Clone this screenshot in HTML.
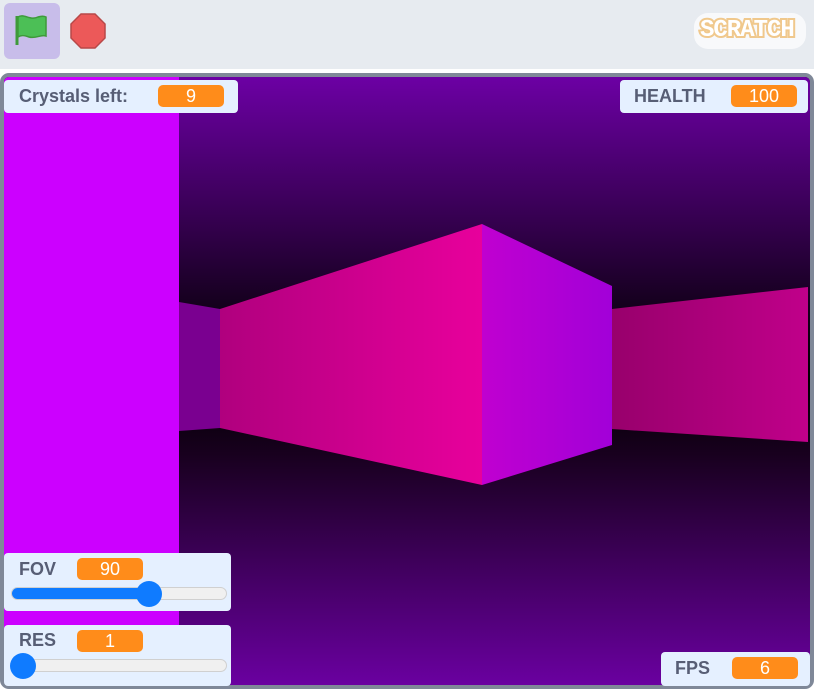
<!DOCTYPE html>
<html><head><style>
body{margin:0;width:814px;height:689px;background:#fff;position:relative;overflow:hidden;font-family:"Liberation Sans",sans-serif}
.top{position:absolute;left:0;top:0;width:814px;height:69px;background:#e7ebf0}
.stage{position:absolute;left:0;top:73px;width:806px;height:608px;border:4px solid #7f8898;border-radius:9px;overflow:hidden;background:#000}
.p{position:absolute;background:#e5f0ff;border-radius:4px;color:#575e75;font-weight:bold;font-size:18px}
.v{position:absolute;background:#ff8c1a;color:#fff;border-radius:5px;text-align:center;font-weight:normal;font-size:18px;height:22px;line-height:22px}
.track{position:absolute;left:7px;height:11px;width:214px;background:#f0f0f0;border:1px solid #d0d0d0;border-radius:7px}
.fill{position:absolute;left:0;top:0;height:11px;background:#0f7bff;border-radius:7px}
.knob{position:absolute;width:26px;height:26px;border-radius:50%;background:#0f7bff}
</style></head><body>
<div class="top"></div>
<div style="position:absolute;left:4px;top:3px;width:56px;height:56px;background:#c8bdea;border-radius:6px"></div>
<svg style="position:absolute;left:14px;top:12px" width="36" height="36" viewBox="0 0 36 36"><path d="M3 4 L3 33" stroke="#3e9a3a" stroke-width="3"/><path d="M4 5 C10 1,16 9,24 5 C27 4,30 4,32 5 L32 24 C27 22,22 27,15 25 C10 23,7 23,4 25 Z" fill="#4cbf56" stroke="#3e9a3a" stroke-width="1.5"/></svg>
<svg style="position:absolute;left:70px;top:13px" width="36" height="36" viewBox="0 0 36 36"><polygon points="11,1 25,1 35,11 35,25 25,35 11,35 1,25 1,11" fill="#ec5959" stroke="#b84848" stroke-width="1.5"/></svg>
<div style="position:absolute;left:694px;top:13px;width:112px;height:36px;background:#f8f9fb;border-radius:14px"></div>
<div style="position:absolute;left:700px;top:17px;font-family:'Liberation Mono',monospace;font-weight:bold;font-size:24px;color:#f2d2a0;-webkit-text-stroke:4px #f0c88c;letter-spacing:-1px">SCRATCH</div>
<div style="position:absolute;left:700px;top:17px;font-family:'Liberation Mono',monospace;font-weight:bold;font-size:24px;color:#fff;letter-spacing:-1px">SCRATCH</div>
<div class="stage">
<svg width="806" height="608" viewBox="4 78 806 608" style="display:block">
<defs>
<linearGradient id="sky" x1="0" y1="0" x2="0" y2="1"><stop offset="0" stop-color="#6c00a4"/><stop offset="0.38" stop-color="#14001c"/><stop offset="0.5" stop-color="#000"/><stop offset="0.62" stop-color="#18001e"/><stop offset="1" stop-color="#6a00a0"/></linearGradient>
<linearGradient id="front" x1="0" y1="0" x2="1" y2="0"><stop offset="0" stop-color="#b0007e"/><stop offset="1" stop-color="#e8009c"/></linearGradient>
<linearGradient id="side" x1="0" y1="0" x2="1" y2="0"><stop offset="0" stop-color="#c000d0"/><stop offset="1" stop-color="#a200d8"/></linearGradient>
<linearGradient id="far" x1="0" y1="0" x2="1" y2="0"><stop offset="0" stop-color="#98006c"/><stop offset="1" stop-color="#c0008a"/></linearGradient>
</defs>
<rect x="4" y="78" width="806" height="608" fill="url(#sky)"/>
<polygon points="179,303 220,310 220,429 179,432" fill="#7a0090"/>
<polygon points="220,310 482,225 482,486 220,429" fill="url(#front)"/>
<polygon points="482,225 612,287 612,446 482,486" fill="url(#side)"/>
<polygon points="612,310 808,288 808,443 612,430" fill="url(#far)"/>
<rect x="4" y="78" width="175" height="608" fill="#cc00ff"/>
</svg>
</div>
<div class="p" style="left:4px;top:80px;width:234px;height:33px"><span style="position:absolute;left:15px;top:6px">Crystals left:</span><div class="v" style="left:154px;top:5px;width:66px">9</div></div>
<div class="p" style="left:620px;top:80px;width:188px;height:33px"><span style="position:absolute;left:14px;top:6px">HEALTH</span><div class="v" style="left:111px;top:5px;width:66px">100</div></div>
<div class="p" style="left:4px;top:553px;width:227px;height:58px"><span style="position:absolute;left:15px;top:6px">FOV</span><div class="v" style="left:73px;top:5px;width:66px">90</div><div class="track" style="top:34px"><div class="fill" style="width:140px"></div></div><div class="knob" style="left:132px;top:28px"></div></div>
<div class="p" style="left:4px;top:625px;width:227px;height:61px"><span style="position:absolute;left:15px;top:5px">RES</span><div class="v" style="left:73px;top:5px;width:66px">1</div><div class="track" style="top:34px"></div><div class="knob" style="left:6px;top:28px"></div></div>
<div class="p" style="left:661px;top:652px;width:149px;height:34px"><span style="position:absolute;left:14px;top:6px">FPS</span><div class="v" style="left:71px;top:5px;width:66px">6</div></div>
</body></html>
